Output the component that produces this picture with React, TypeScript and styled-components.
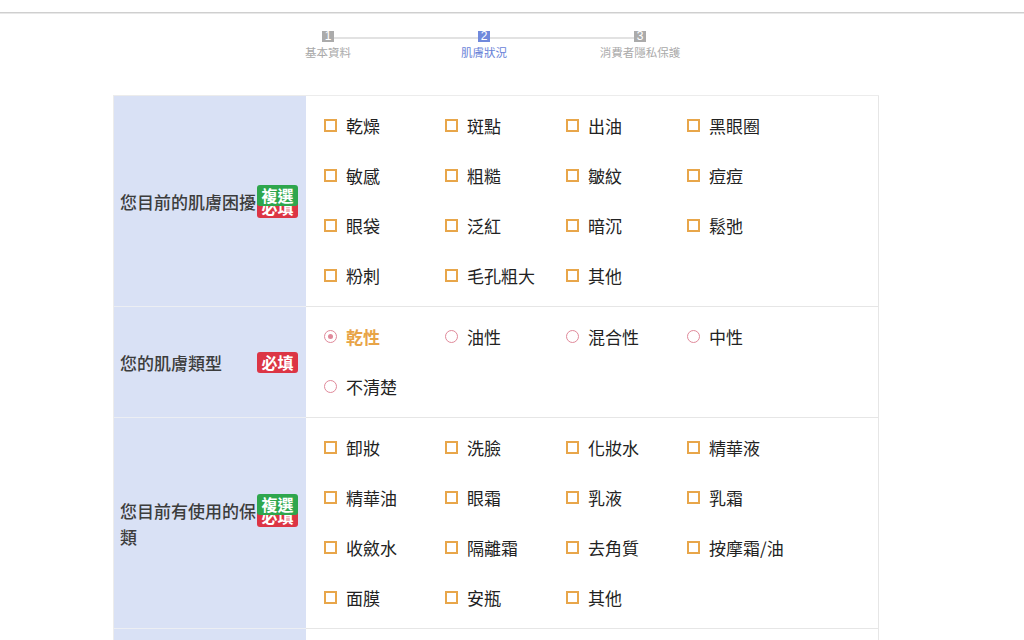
import React from "react";
import styled, { createGlobalStyle } from "styled-components";

const Global = createGlobalStyle`
  html, body { margin: 0; padding: 0; background: #fff; }
  body { font-family: "Noto Sans CJK TC", "Noto Sans", sans-serif; color: #333; overflow: hidden; }
`;

const TopBar = styled.div`
  height: 12px;
  border-bottom: 1px solid #cfcfcf;
  box-shadow: 0 1px 0 #e8e8e8;
`;

const Steps = styled.div`
  display: grid;
  grid-template-columns: repeat(3, 156px);
  width: 468px;
  margin: 18px 0 0 250px;
  position: relative;
`;

const StepLine = styled.div`
  position: absolute;
  left: 78px;
  right: 78px;
  top: 6px;
  height: 2px;
  background: #e2e2e2;
`;

const Step = styled.div<{ $active?: boolean }>`
  display: flex;
  flex-direction: column;
  align-items: center;
  position: relative;
  z-index: 1;
  color: ${(p) => (p.$active ? "#6a83d8" : "#a9a9a9")};
`;

const StepNum = styled.span<{ $active?: boolean }>`
  display: block;
  height: 11px;
  line-height: 11px;
  padding: 0 3px;
  font-family: "Liberation Sans", sans-serif;
  font-size: 12px;
  color: #fff;
  background: ${(p) => (p.$active ? "#7089dc" : "#ababab")};
`;

const StepLabel = styled.span`
  font-size: 11.5px;
  line-height: 16px;
  margin-top: 2px;
`;

const Table = styled.div`
  width: 765px;
  margin: 35px 0 0 113px;
  border-top: 1px solid #ececec;
  border-left: 1px solid #ececec;
`;

const Row = styled.div`
  display: grid;
  grid-template-columns: 192px 573px;
`;

const LabelCell = styled.div`
  background: #d9e1f5;
  border-bottom: 1px solid #eceef3;
  display: flex;
  align-items: center;
  padding: 2px 8px 0 6px;
`;

const LabelText = styled.div`
  position: relative;
  flex: 1;
  font-size: 17px;
  line-height: 26px;
  font-weight: 500;
  color: #3c3c3c;
  padding-right: 36px;
`;

const Badges = styled.div<{ $stack?: boolean }>`
  position: absolute;
  right: 0;
  top: ${(p) => (p.$stack ? "-4px" : "2px")};
  width: 41px;
`;

const Badge = styled.span<{ $kind: "multi" | "req"; $stack?: boolean }>`
  position: absolute;
  right: 0;
  top: ${(p) => (p.$stack ? "12px" : "0")};
  z-index: ${(p) => (p.$kind === "multi" ? 2 : 1)};
  height: 21px;
  line-height: 21px;
  width: 41px;
  text-align: center;
  border-radius: 3px;
  font-size: 16px;
  font-weight: 700;
  color: #fff;
  background: ${(p) => (p.$kind === "multi" ? "#2ea64d" : "#dc3545")};
`;

const ValueCell = styled.div`
  border-bottom: 1px solid #e6e6e6;
  border-right: 1px solid #e6e6e6;
  padding: 4px 0 6px 18px;
  display: grid;
  grid-template-columns: repeat(4, 121px);
  grid-auto-rows: 50px;
`;

const Option = styled.label<{ $checked?: boolean }>`
  display: flex;
  align-items: center;
  gap: 9px;
  font-size: 17px;
  color: ${(p) => (p.$checked ? "#e8a447" : "#222")};
  font-weight: ${(p) => (p.$checked ? 700 : 400)};
  white-space: nowrap;
`;

const Box = styled.span`
  width: 9px;
  height: 9px;
  border: 2px solid #e8a64a;
  flex: none;
`;

const Radio = styled.span<{ $checked?: boolean }>`
  width: 11px;
  height: 11px;
  border: 1.5px solid #e0899a;
  border-radius: 50%;
  flex: none;
  display: flex;
  align-items: center;
  justify-content: center;
  &::after {
    content: "";
    width: 5px;
    height: 5px;
    border-radius: 50%;
    background: ${(p) => (p.$checked ? "#e0899a" : "transparent")};
  }
`;

type Q = {
  label: string;
  multi?: boolean;
  radio?: boolean;
  checked?: string;
  items: string[];
};

const questions: Q[] = [
  {
    label: "您目前的肌膚困擾",
    multi: true,
    items: ["乾燥", "斑點", "出油", "黑眼圈", "敏感", "粗糙", "皺紋", "痘痘", "眼袋", "泛紅", "暗沉", "鬆弛", "粉刺", "毛孔粗大", "其他"],
  },
  {
    label: "您的肌膚類型",
    radio: true,
    checked: "乾性",
    items: ["乾性", "油性", "混合性", "中性", "不清楚"],
  },
  {
    label: "您目前有使用的保類",
    multi: true,
    items: ["卸妝", "洗臉", "化妝水", "精華液", "精華油", "眼霜", "乳液", "乳霜", "收斂水", "隔離霜", "去角質", "按摩霜/油", "面膜", "安瓶", "其他"],
  },
  {
    label: "您的年齡層",
    radio: true,
    items: ["20歲以下", "21-30歲", "31-40歲", "41歲以上"],
  },
];

export default function App() {
  return (
    <>
      <Global />
      <TopBar />
      <Steps>
        <StepLine />
        <Step>
          <StepNum>1</StepNum>
          <StepLabel>基本資料</StepLabel>
        </Step>
        <Step $active>
          <StepNum $active>2</StepNum>
          <StepLabel>肌膚狀況</StepLabel>
        </Step>
        <Step>
          <StepNum>3</StepNum>
          <StepLabel>消費者隱私保護</StepLabel>
        </Step>
      </Steps>
      <Table>
        {questions.map((q) => (
          <Row key={q.label}>
            <LabelCell>
              <LabelText>
                {q.label}
                <Badges $stack={q.multi}>
                  {q.multi && <Badge $kind="multi">複選</Badge>}
                  <Badge $kind="req" $stack={q.multi}>必填</Badge>
                </Badges>
              </LabelText>
            </LabelCell>
            <ValueCell>
              {q.items.map((it) => {
                const c = q.checked === it;
                return (
                  <Option key={it} $checked={c}>
                    {q.radio ? <Radio $checked={c} /> : <Box />}
                    {it}
                  </Option>
                );
              })}
            </ValueCell>
          </Row>
        ))}
      </Table>
    </>
  );
}
